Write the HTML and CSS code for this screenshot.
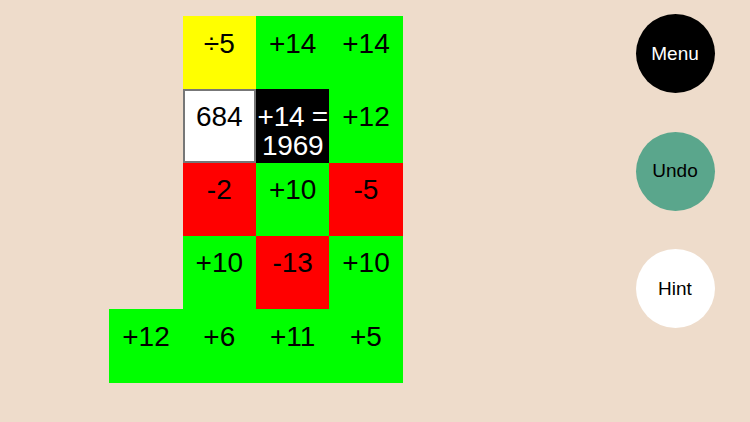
FILE: index.html
```html
<!DOCTYPE html>
<html>
<head>
<meta charset="utf-8">
<link rel="stylesheet" href="styles.css">
</head>
<body>
<div class="screen">
  <div class="board">
    <div class="cell empty"></div>
    <div class="cell yellow">÷5</div>
    <div class="cell green">+14</div>
    <div class="cell green">+14</div>

    <div class="cell empty"></div>
    <div class="cell white">684</div>
    <div class="cell black">+14 =<br>1969</div>
    <div class="cell green">+12</div>

    <div class="cell empty"></div>
    <div class="cell red">-2</div>
    <div class="cell green">+10</div>
    <div class="cell red">-5</div>

    <div class="cell empty"></div>
    <div class="cell green">+10</div>
    <div class="cell red">-13</div>
    <div class="cell green">+10</div>

    <div class="cell green">+12</div>
    <div class="cell green">+6</div>
    <div class="cell green">+11</div>
    <div class="cell green">+5</div>
  </div>
  <div class="controls">
    <div class="btn btn-menu">Menu</div>
    <div class="btn btn-undo">Undo</div>
    <div class="btn btn-hint">Hint</div>
  </div>
</div>
</body>
</html>
```
FILE: styles.css
```css
html, body {
  margin: 0;
  padding: 0;
}
body {
  background: #eedccb;
  width: 750px;
  height: 422px;
  overflow: hidden;
  font-family: "Liberation Sans", Arial, sans-serif;
}
.screen {
  display: flex;
  align-items: flex-start;
  padding-left: 109.33px;
  padding-right: 35.5px;
}
.board {
  margin-top: 16px;
  display: grid;
  grid-template-columns: repeat(4, 73.33px);
  grid-template-rows: repeat(5, 73.33px);
}
.cell {
  box-sizing: border-box;
  text-align: center;
  font-size: 28px;
  line-height: 29.5px;
  padding-top: 12.5px;
  color: #000;
}
.empty { background: transparent; }
.yellow { background: #ffff00; }
.green { background: #00ff00; }
.red { background: #ff0000; }
.white {
  background: #ffffff;
  border: 2px solid #777777;
  padding-top: 10.5px;
}
.black {
  background: #000000;
  color: #ffffff;
  white-space: nowrap;
  letter-spacing: -0.3px;
}
.controls {
  margin-left: auto;
  margin-top: 14px;
  display: flex;
  flex-direction: column;
  gap: 38.5px;
}
.btn {
  width: 79px;
  height: 79px;
  border-radius: 50%;
  display: flex;
  align-items: center;
  justify-content: center;
  font-size: 19px;
}
.btn-menu { background: #000000; color: #ffffff; }
.btn-undo { background: #5aa68c; color: #000000; }
.btn-hint { background: #ffffff; color: #000000; }
```
